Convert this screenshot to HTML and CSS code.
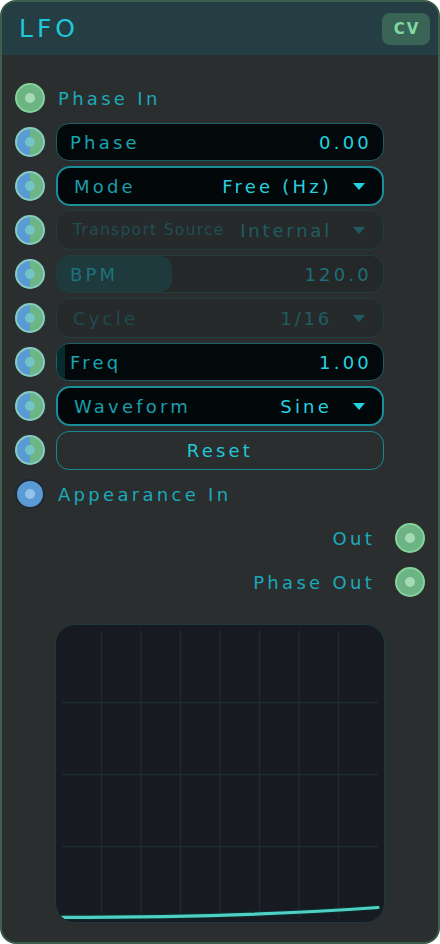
FILE: index.html
```html
<!DOCTYPE html>
<html>
<head>
<meta charset="utf-8">
<link rel="stylesheet" href="styles.css">
</head>
<body>
<div class="card">
  <div class="header">
    <span class="title">LFO</span>
    <span class="badge">CV</span>
  </div>
  <div class="content">
    <div class="row">
      <span class="port green"></span>
      <span class="plabel">Phase In</span>
    </div>
    <div class="row">
      <span class="port split"></span>
      <div class="ctl slider active"><span class="fill" style="width:0%"></span><span class="lbl">Phase</span><span class="val">0.00</span></div>
    </div>
    <div class="row">
      <span class="port split"></span>
      <div class="ctl select active"><span class="lbl">Mode</span><span class="val">Free (Hz)</span><span class="arrow"></span></div>
    </div>
    <div class="row">
      <span class="port split"></span>
      <div class="ctl select disabled"><span class="lbl small">Transport Source</span><span class="val">Internal</span><span class="arrow"></span></div>
    </div>
    <div class="row">
      <span class="port split"></span>
      <div class="ctl slider dim"><span class="fill" style="width:35.4%"></span><span class="lbl">BPM</span><span class="val">120.0</span></div>
    </div>
    <div class="row">
      <span class="port split"></span>
      <div class="ctl select disabled"><span class="lbl">Cycle</span><span class="val">1/16</span><span class="arrow"></span></div>
    </div>
    <div class="row">
      <span class="port split"></span>
      <div class="ctl slider active"><span class="fill tealfill" style="width:2.4%"></span><span class="lbl">Freq</span><span class="val">1.00</span></div>
    </div>
    <div class="row">
      <span class="port split"></span>
      <div class="ctl select active"><span class="lbl">Waveform</span><span class="val">Sine</span><span class="arrow"></span></div>
    </div>
    <div class="row">
      <span class="port split"></span>
      <div class="ctl button">Reset</div>
    </div>
    <div class="row">
      <span class="port blue"></span>
      <span class="plabel">Appearance In</span>
    </div>
    <div class="row">
      <span class="plabel out">Out</span>
      <span class="port green right"></span>
    </div>
    <div class="row">
      <span class="plabel out">Phase Out</span>
      <span class="port green right"></span>
    </div>
    <div class="graph">
      <svg viewBox="0 0 330 299" width="330" height="299">
        <g class="grid">
          <line x1="46.5" y1="6" x2="46.5" y2="294"/>
          <line x1="86" y1="6" x2="86" y2="294"/>
          <line x1="125.5" y1="6" x2="125.5" y2="294"/>
          <line x1="165" y1="6" x2="165" y2="294"/>
          <line x1="204.5" y1="6" x2="204.5" y2="294"/>
          <line x1="244" y1="6" x2="244" y2="294"/>
          <line x1="283.5" y1="6" x2="283.5" y2="294"/>
          <line x1="7" y1="78.5" x2="323" y2="78.5"/>
          <line x1="7" y1="150.5" x2="323" y2="150.5"/>
          <line x1="7" y1="222.5" x2="323" y2="222.5"/>
        </g>
        <path class="curve-shadow" d="M7 293.3 C 110 293.3, 220 291, 323 283.5"/>
        <path class="curve" d="M7 293.3 C 110 293.3, 220 291, 323 283.5"/>
      </svg>
    </div>
  </div>
</div>
</body>
</html>
```
FILE: styles.css
```css
* { box-sizing: border-box; }
html, body { margin: 0; padding: 0; background: #ffffff; }
body { font-family: "DejaVu Sans", "Noto Sans", sans-serif; }

.card {
  width: 440px;
  height: 944px;
  border: 2px solid #3c5e4d;
  border-radius: 16px;
  overflow: hidden;
  background: #2a2e2f;
  display: flex;
  flex-direction: column;
}

.header {
  height: 53px;
  background: #253e43;
  display: flex;
  align-items: center;
  justify-content: space-between;
  padding: 0 8px 0 17px;
}
.title {
  color: #1ec8d8;
  font-size: 25px;
  letter-spacing: 4px;
  font-weight: 400;
}
.badge {
  width: 48px;
  height: 32px;
  border-radius: 8px;
  background: #3a6455;
  color: #80d9a2;
  font-weight: 700;
  font-size: 15px;
  letter-spacing: 2px;
  display: flex;
  align-items: center;
  justify-content: center;
  padding-left: 2px;
}

.content {
  padding: 21px 13px 0 13px;
  display: flex;
  flex-direction: column;
}

.row {
  height: 44px;
  display: grid;
  grid-template-columns: 30px 1fr 30px;
  column-gap: 11px;
  align-items: center;
}

.port {
  width: 30px;
  height: 30px;
  border-radius: 50%;
  position: relative;
  grid-column: 1;
}
.port::after {
  content: "";
  position: absolute;
  left: 50%;
  top: 50%;
  width: 10px;
  height: 10px;
  margin: -5px 0 0 -5px;
  border-radius: 50%;
}
.port.right { grid-column: 3; }
.port.green {
  background: #6db484;
  border: 2px solid #84d39b;
}
.port.green::after { background: #a7d9b5; }
.port.split {
  background: linear-gradient(90deg, #5b9bd5 50%, #6db585 50%);
  border: 2px solid #86cdc0;
}
.port.split::after { background: #72c4c6; }
.port.blue {
  background: #5b9bd5;
  border: 2px solid #1e2a31;
}
.port.blue::after { background: #95c2e8; }

.plabel {
  grid-column: 2;
  color: #1ca9b8;
  font-size: 18px;
  letter-spacing: 3.3px;
  padding-left: 2px;
}
.plabel.out {
  text-align: right;
  padding-right: 9px;
}

.ctl {
  grid-column: 2;
  position: relative;
  display: flex;
  align-items: center;
  font-size: 18px;
  letter-spacing: 3.2px;
  overflow: hidden;
}

.slider {
  height: 38px;
  border-radius: 13px;
  padding: 0 11px 0 13px;
  justify-content: space-between;
}
.slider .fill {
  position: absolute;
  left: 0;
  top: 0;
  bottom: 0;
  border-radius: 12px;
}
.slider .lbl, .slider .val { position: relative; }
.slider.active {
  background: #03090b;
  border: 1px solid #1b5f67;
}
.slider.active .lbl { color: #1ca3b1; }
.slider.active .val { color: #23d3e1; }
.slider .tealfill { background: #0a2a2e; border-radius: 12px 0 0 12px; }
.slider.dim {
  background: #242829;
  border: 1px solid #213d40;
}
.slider.dim .fill { background: #1e3a3d; }
.slider.dim .lbl { color: #1d727a; }
.slider.dim .val { color: #1d6f77; }

.select {
  height: 40px;
  border-radius: 14px;
  padding: 0 17px 0 16px;
}
.select .lbl { flex: 1; }
.select .val { margin-right: 21px; }
.select .arrow {
  width: 0;
  height: 0;
  border-left: 6.5px solid transparent;
  border-right: 6.5px solid transparent;
  border-top: 7px solid #23d3e1;
  margin-top: 1px;
}
.select.active {
  background: #020709;
  border: 2px solid #1b8d99;
}
.select.active .lbl { color: #1d9dab; }
.select.active .val { color: #26d1df; }
.select.disabled {
  background: #262a2b;
  border: 1px solid #213b3e;
  padding-left: 16px;
  padding-right: 18px;
}
.select.disabled .lbl { color: #1e4a4f; }
.select.disabled .lbl.small { font-size: 15.5px; letter-spacing: 1.3px; color: #1f4e53; }
.select.disabled .val { color: #1f5c62; letter-spacing: 2.8px; }
.select.disabled .arrow { border-top-color: #1f5c62; }

.button {
  height: 39px;
  border-radius: 13px;
  border: 1px solid #1a8894;
  justify-content: center;
  color: #22c7d6;
}

.graph {
  margin: 20px 27px 0 27px;
  width: 330px;
  height: 299px;
  align-self: center;
  background: #171a20;
  border: 1px solid #1c3a3f;
  border-radius: 20px;
  overflow: hidden;
}
.graph svg { display: block; margin: -1px; }
.grid line { stroke: #1d2b30; stroke-width: 1.5; }
.curve-shadow { fill: none; stroke: #0e2a2c; stroke-width: 5.5; stroke-linecap: round; }
.curve { fill: none; stroke: #4fd0c4; stroke-width: 3.2; stroke-linecap: round; }
```
